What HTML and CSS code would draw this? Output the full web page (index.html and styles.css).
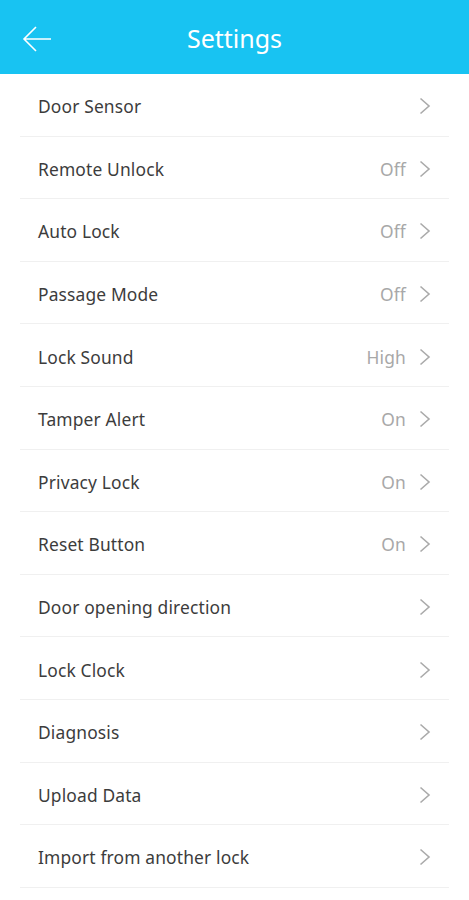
FILE: index.html
```html
<!DOCTYPE html>
<html>
	<head>
		<meta charset="UTF-8">
		<title>Settings</title>
		<link rel="stylesheet" href="styles.css">
	</head>
	<body>
		<div class="header">
			<span class="back">
				<svg width="30" height="28" viewBox="0 0 30 28"><path d="M29 14H2M14 2L2 14l12 12" fill="none" stroke="#fff" stroke-width="1.6"/></svg>
			</span>
			<h1>Settings</h1>
		</div>
		<ul class="list">
			<li><span class="name">Door Sensor</span><span class="val"></span><svg class="arr" viewBox="0 0 12 18"><path d="M1.5 1.5L10 9l-8.5 7.5"/></svg></li>
			<li><span class="name">Remote Unlock</span><span class="val">Off</span><svg class="arr" viewBox="0 0 12 18"><path d="M1.5 1.5L10 9l-8.5 7.5"/></svg></li>
			<li><span class="name">Auto Lock</span><span class="val">Off</span><svg class="arr" viewBox="0 0 12 18"><path d="M1.5 1.5L10 9l-8.5 7.5"/></svg></li>
			<li><span class="name">Passage Mode</span><span class="val">Off</span><svg class="arr" viewBox="0 0 12 18"><path d="M1.5 1.5L10 9l-8.5 7.5"/></svg></li>
			<li><span class="name">Lock Sound</span><span class="val">High</span><svg class="arr" viewBox="0 0 12 18"><path d="M1.5 1.5L10 9l-8.5 7.5"/></svg></li>
			<li><span class="name">Tamper Alert</span><span class="val">On</span><svg class="arr" viewBox="0 0 12 18"><path d="M1.5 1.5L10 9l-8.5 7.5"/></svg></li>
			<li><span class="name">Privacy Lock</span><span class="val">On</span><svg class="arr" viewBox="0 0 12 18"><path d="M1.5 1.5L10 9l-8.5 7.5"/></svg></li>
			<li><span class="name">Reset Button</span><span class="val">On</span><svg class="arr" viewBox="0 0 12 18"><path d="M1.5 1.5L10 9l-8.5 7.5"/></svg></li>
			<li><span class="name">Door opening direction</span><span class="val"></span><svg class="arr" viewBox="0 0 12 18"><path d="M1.5 1.5L10 9l-8.5 7.5"/></svg></li>
			<li><span class="name">Lock Clock</span><span class="val"></span><svg class="arr" viewBox="0 0 12 18"><path d="M1.5 1.5L10 9l-8.5 7.5"/></svg></li>
			<li><span class="name">Diagnosis</span><span class="val"></span><svg class="arr" viewBox="0 0 12 18"><path d="M1.5 1.5L10 9l-8.5 7.5"/></svg></li>
			<li><span class="name">Upload Data</span><span class="val"></span><svg class="arr" viewBox="0 0 12 18"><path d="M1.5 1.5L10 9l-8.5 7.5"/></svg></li>
			<li><span class="name">Import from another lock</span><span class="val"></span><svg class="arr" viewBox="0 0 12 18"><path d="M1.5 1.5L10 9l-8.5 7.5"/></svg></li>
		</ul>
	</body>
</html>
```
FILE: styles.css
```css
*{
	margin: 0;
	padding: 0;
}
body{
	font-family: "Noto Sans", "Open Sans", sans-serif;
	background: #fff;
	width: 469px;
}
li{
	list-style: none;
}
.header{
	height: 74px;
	background-color: #18c3f2;
	position: relative;
	display: flex;
	align-items: center;
	justify-content: center;
}
.header h1{
	color: #fff;
	font-size: 25px;
	font-weight: normal;
	padding-top: 2px;
}
.back{
	position: absolute;
	left: 22px;
	top: 25px;
	height: 28px;
}
.list{
	padding: 0 20px;
}
.list li{
	height: 62.6px;
	box-sizing: border-box;
	border-bottom: solid 1px #f0f0f0;
	display: flex;
	align-items: center;
	padding: 3px 18px 0;
}
.name{
	flex: 1;
	font-size: 17.4px;
	color: #3c3c3c;
	letter-spacing: 0.15px;
}
.val{
	font-size: 17.4px;
	color: #a8a8a8;
	margin-right: 13px;
	letter-spacing: 0.15px;
}
/* 右箭头 */
.arr{
	width: 12px;
	height: 18px;
	fill: none;
	stroke: #aaa;
	stroke-width: 1.6;
}
```
